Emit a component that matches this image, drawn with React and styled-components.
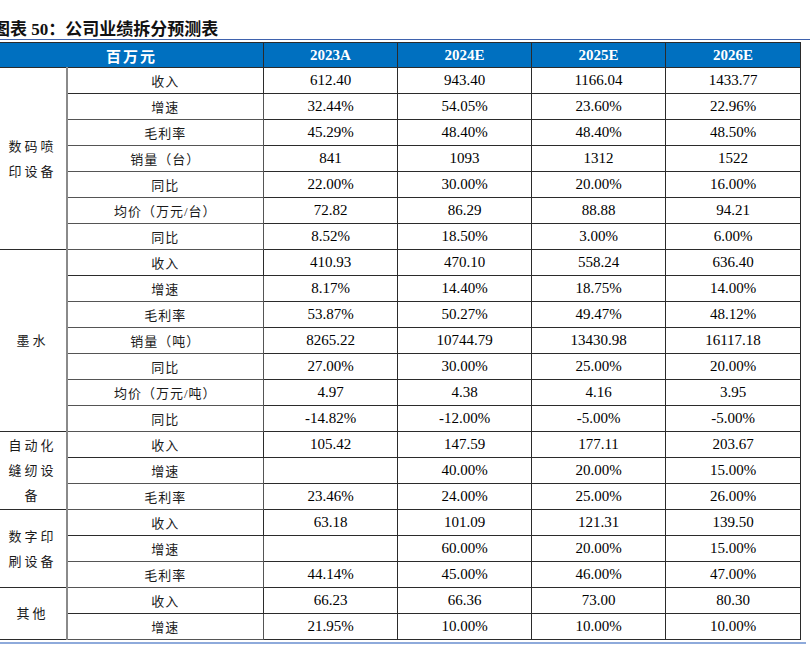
import React from 'react';
import styled, { createGlobalStyle } from 'styled-components';

const GlobalStyle = createGlobalStyle`
    body {
        margin: 0;
        background: #ffffff;
        font-family: 'Liberation Serif', 'Noto Sans CJK SC', serif;
        color: #000000;
    }
`;

const Page = styled.div`
    width: 810px;
    height: 651px;
    overflow: hidden;
    padding-top: 21px;
    box-sizing: border-box;
`;

const Title = styled.div`
    padding-left: 0;
    margin-left: -7px;
    height: 18px;
    font-size: 17px;
    line-height: 18px;
    font-weight: bold;
    color: #111111;
    white-space: nowrap;
`;

const Rule = styled.div`
    height: ${(p) => p.thick}px;
    background: ${(p) => p.color};
    width: ${(p) => p.width}px;
`;

const Table = styled.table`
    margin-left: -1px;
    margin-top: 2px;
    margin-bottom: 2px;
    width: 801px;
    border-collapse: collapse;
    table-layout: fixed;
`;

const Col = styled.col`
    width: ${(p) => p.w}px;
`;

const HeadCell = styled.th`
    height: 24px;
    padding: 0;
    background: #0070c0;
    color: #ffffff;
    font-size: 15px;
    font-weight: bold;
    text-align: center;
    border: 1px solid #2b2b2b;
    letter-spacing: ${(p) => (p.cjk ? '2px' : '0')};
`;

const GroupCell = styled.td`
    padding: 0;
    font-size: 13px;
    line-height: 25px;
    letter-spacing: 3px;
    text-align: center;
    color: #1a1a1a;
    border-top: 1px solid #2b2b2b;
    border-bottom: 1px solid #2b2b2b;
    border-right: 2px solid #8a8a8a;
`;

const LabelCell = styled.td`
    height: 25px;
    padding: 0;
    font-size: 13px;
    letter-spacing: 1px;
    text-align: center;
    color: #1a1a1a;
    border: 1px solid ${(p) => (p.edge ? '#2b2b2b' : '#555555')};
    border-left: 2px solid #8a8a8a;
`;

const ValueCell = styled.td`
    height: 25px;
    padding: 0;
    font-size: 15px;
    text-align: center;
    border: 1px solid #2b2b2b;
    border-top-color: ${(p) => (p.edge ? '#2b2b2b' : '#555555')};
`;

const widths = [67, 197, 134, 134, 134, 135];
const years = ['2023A', '2024E', '2025E', '2026E'];

const groups = [
    {
        name: ['数码喷', '印设备'],
        rows: [
            ['收入', '612.40', '943.40', '1166.04', '1433.77'],
            ['增速', '32.44%', '54.05%', '23.60%', '22.96%'],
            ['毛利率', '45.29%', '48.40%', '48.40%', '48.50%'],
            ['销量（台）', '841', '1093', '1312', '1522'],
            ['同比', '22.00%', '30.00%', '20.00%', '16.00%'],
            ['均价（万元/台）', '72.82', '86.29', '88.88', '94.21'],
            ['同比', '8.52%', '18.50%', '3.00%', '6.00%'],
        ],
    },
    {
        name: ['墨水'],
        rows: [
            ['收入', '410.93', '470.10', '558.24', '636.40'],
            ['增速', '8.17%', '14.40%', '18.75%', '14.00%'],
            ['毛利率', '53.87%', '50.27%', '49.47%', '48.12%'],
            ['销量（吨）', '8265.22', '10744.79', '13430.98', '16117.18'],
            ['同比', '27.00%', '30.00%', '25.00%', '20.00%'],
            ['均价（万元/吨）', '4.97', '4.38', '4.16', '3.95'],
            ['同比', '-14.82%', '-12.00%', '-5.00%', '-5.00%'],
        ],
    },
    {
        name: ['自动化', '缝纫设', '备'],
        rows: [
            ['收入', '105.42', '147.59', '177.11', '203.67'],
            ['增速', '', '40.00%', '20.00%', '15.00%'],
            ['毛利率', '23.46%', '24.00%', '25.00%', '26.00%'],
        ],
    },
    {
        name: ['数字印', '刷设备'],
        rows: [
            ['收入', '63.18', '101.09', '121.31', '139.50'],
            ['增速', '', '60.00%', '20.00%', '15.00%'],
            ['毛利率', '44.14%', '45.00%', '46.00%', '47.00%'],
        ],
    },
    {
        name: ['其他'],
        rows: [
            ['收入', '66.23', '66.36', '73.00', '80.30'],
            ['增速', '21.95%', '10.00%', '10.00%', '10.00%'],
        ],
    },
];

const App = () => {
    return (
        <Page>
            <GlobalStyle />
            <Title>图表 50：公司业绩拆分预测表</Title>
            <Rule thick={1} color="#3f62ad" width={810} />
            <Table>
                <colgroup>
                    {widths.map((w, i) => (
                        <Col key={i} w={w} />
                    ))}
                </colgroup>
                <thead>
                    <tr>
                        <HeadCell colSpan={2} cjk>
                            百万元
                        </HeadCell>
                        {years.map((y) => (
                            <HeadCell key={y}>{y}</HeadCell>
                        ))}
                    </tr>
                </thead>
                <tbody>
                    {groups.map((g) =>
                        g.rows.map((r, i) => (
                            <tr key={g.name.join('') + i}>
                                {i === 0 && (
                                    <GroupCell rowSpan={g.rows.length}>
                                        {g.name.map((line) => (
                                            <div key={line}>{line}</div>
                                        ))}
                                    </GroupCell>
                                )}
                                <LabelCell edge={i === 0}>{r[0]}</LabelCell>
                                {r.slice(1).map((v, j) => (
                                    <ValueCell key={j} edge={i === 0}>
                                        {v}
                                    </ValueCell>
                                ))}
                            </tr>
                        ))
                    )}
                </tbody>
            </Table>
            <Rule thick={2} color="#8eaadb" width={806} />
        </Page>
    );
};

export default App;
